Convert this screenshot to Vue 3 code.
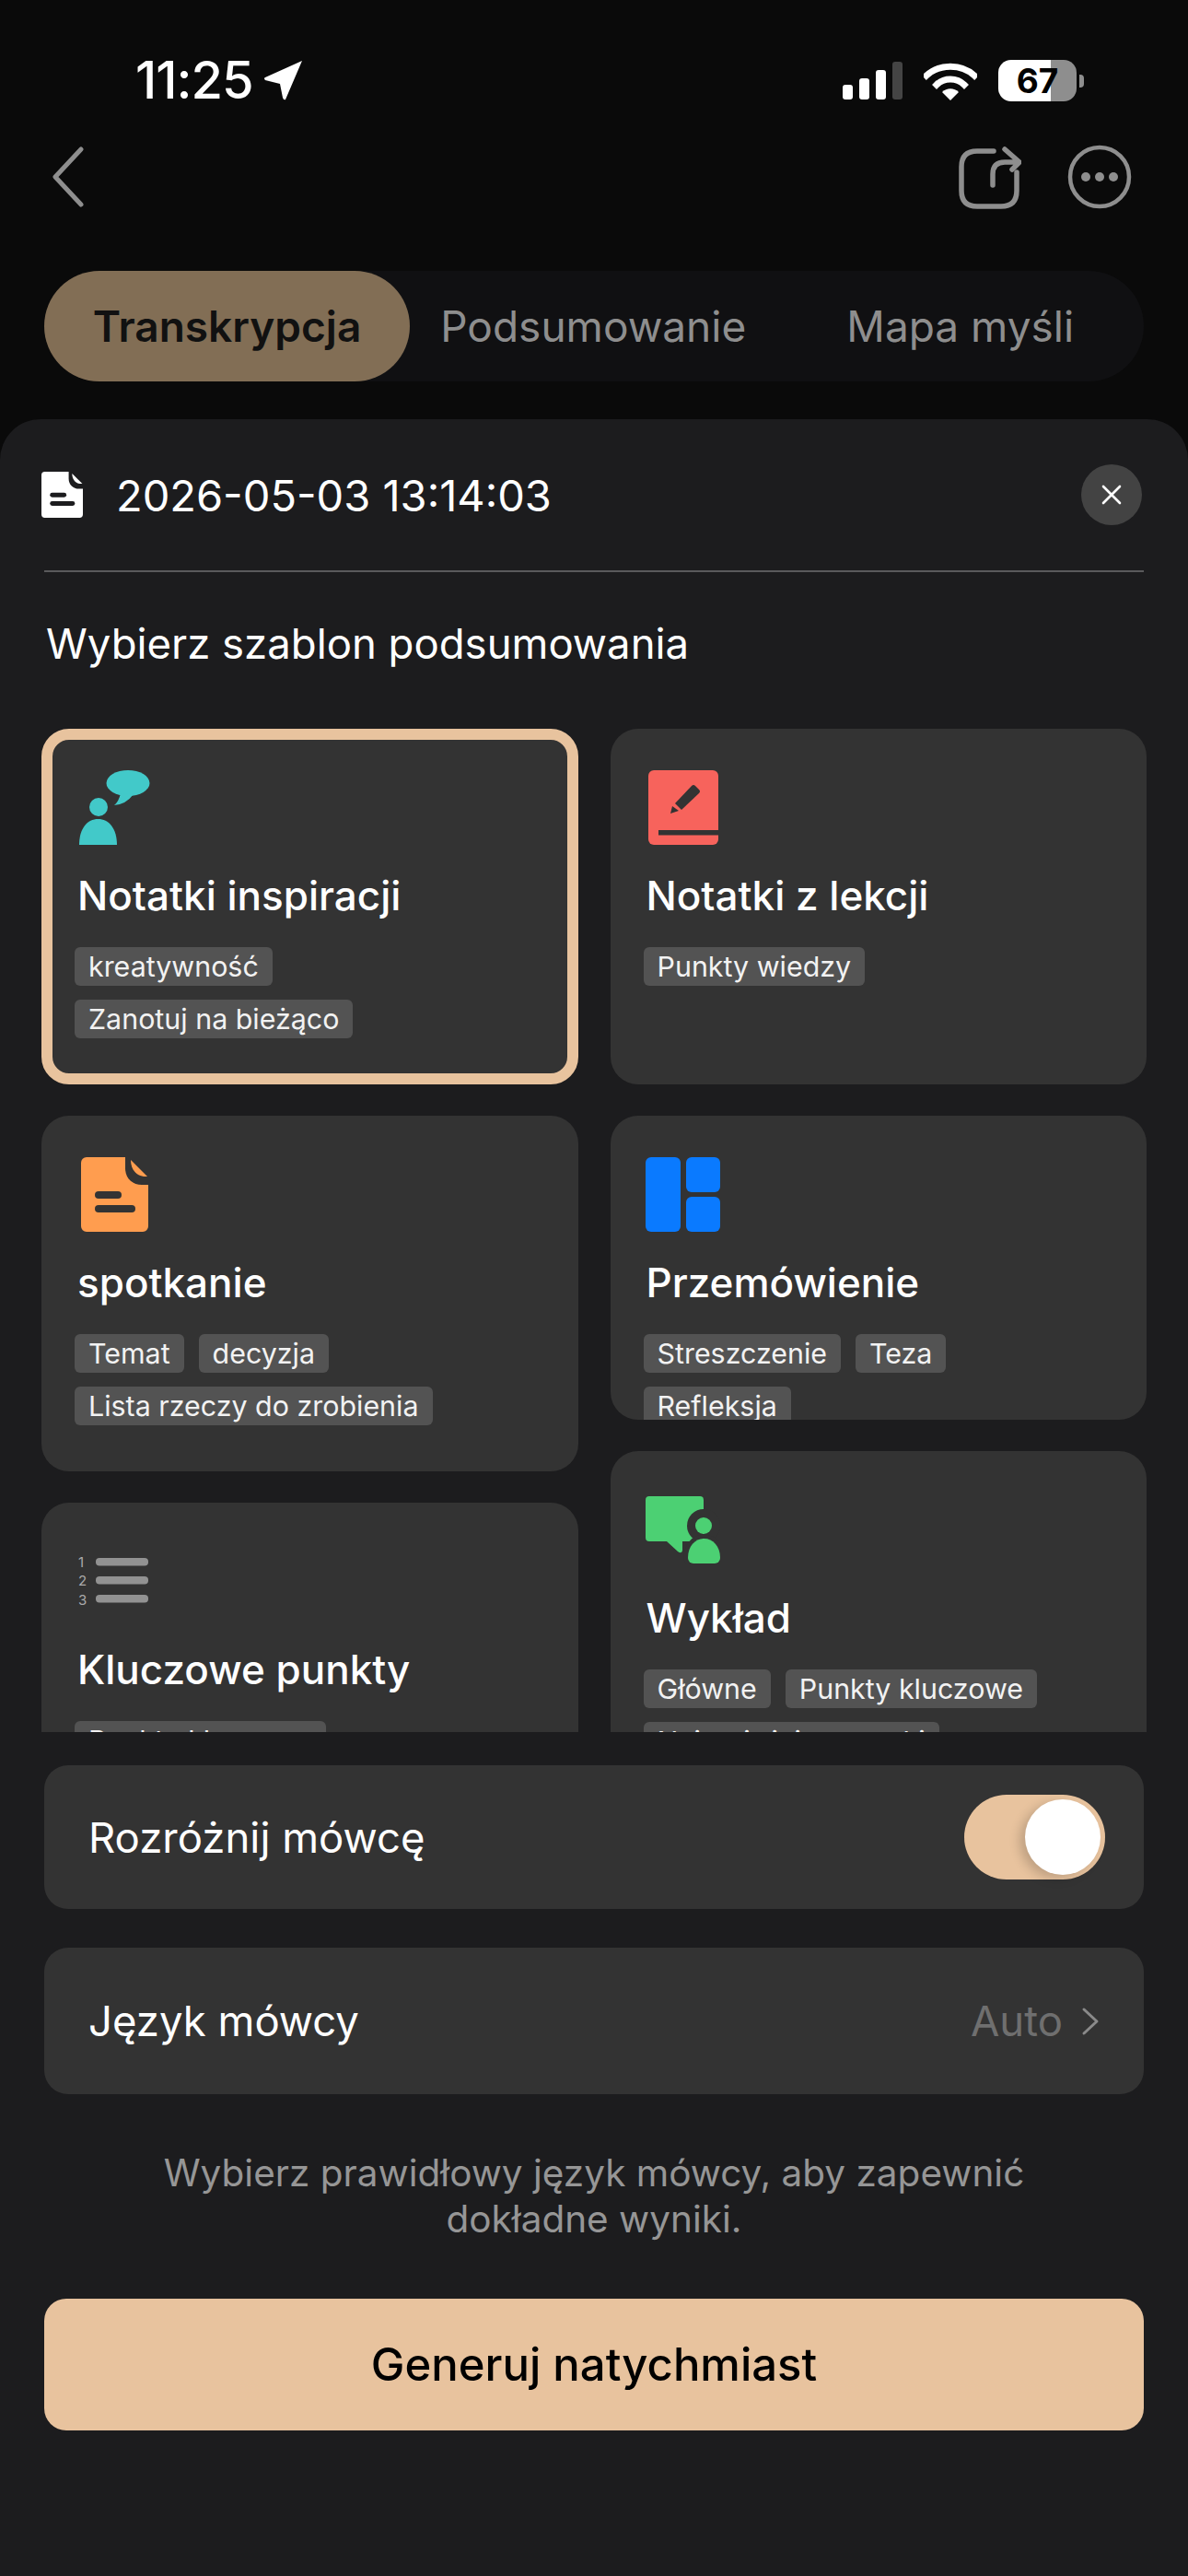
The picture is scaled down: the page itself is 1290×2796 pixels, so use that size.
<script setup>
const columns = [
  [
    { name: 'Notatki inspiracji', icon: 'idea', selected: true, tags: ['kreatywność', 'Zanotuj na bieżąco'] },
    { name: 'spotkanie', icon: 'doc', tags: ['Temat', 'decyzja', 'Lista rzeczy do zrobienia'] },
    { name: 'Kluczowe punkty', icon: 'list', tags: ['Punkty kluczowe'] },
  ],
  [
    { name: 'Notatki z lekcji', icon: 'book', tags: ['Punkty wiedzy'] },
    { name: 'Przemówienie', icon: 'grid', short: true, tags: ['Streszczenie', 'Teza', 'Refleksja'] },
    { name: 'Wykład', icon: 'talk', tags: ['Główne', 'Punkty kluczowe', 'Najważniejsze wątki'] },
  ],
]
</script>

<template>
  <main class="screen">
    <div class="status">
      <div class="clock">
        <span>11:25</span>
        <svg class="loc" viewBox="0 0 44 44" width="44" height="44">
          <path d="M42 1 L24 43 Q22 44 21 41 L18 26 L2 22 Q0 20 2 19 Z" fill="#fff" />
        </svg>
      </div>
      <div class="indicators">
        <svg viewBox="0 0 65 41" width="65" height="41">
          <rect x="0" y="25" width="11" height="16" rx="3" fill="#fff" />
          <rect x="18" y="18" width="11" height="23" rx="3" fill="#fff" />
          <rect x="36" y="9" width="11" height="32" rx="3" fill="#fff" />
          <rect x="54" y="0" width="11" height="41" rx="3" fill="#444" />
        </svg>
        <svg viewBox="0 0 58 42" width="58" height="42">
          <path d="M3 15 C17 2 41 2 55 15" fill="none" stroke="#fff" stroke-width="7" stroke-linecap="square" />
          <path d="M14 25 C22 17 36 17 44 25" fill="none" stroke="#fff" stroke-width="7" stroke-linecap="square" />
          <path d="M29 42 L20 33 C25 28 33 28 38 33 Z" fill="#fff" />
        </svg>
        <div class="battery">
          <div class="battery-body"><span>67</span></div>
          <div class="battery-tip"></div>
        </div>
      </div>
    </div>

    <div class="nav">
      <svg viewBox="0 0 36 66" width="36" height="66">
        <path d="M32 3 L4 33 L32 63" fill="none" stroke="#8e8e8e" stroke-width="5" stroke-linecap="round" stroke-linejoin="round" />
      </svg>
      <div class="nav-right">
        <svg viewBox="0 0 70 70" width="70" height="70">
          <path d="M40 7 H22 Q5 7 5 24 V50 Q5 67 22 67 H48 Q65 67 65 50 V30" fill="none" stroke="#8e8e8e" stroke-width="5.5" stroke-linecap="round" />
          <path d="M39 44 V32 Q39 19 52 19 H67 M52 5 L68 19 L60 27" fill="none" stroke="#8e8e8e" stroke-width="5.5" stroke-linecap="round" stroke-linejoin="round" />
        </svg>
        <svg viewBox="0 0 70 70" width="70" height="70">
          <circle cx="35" cy="35" r="32" fill="none" stroke="#8e8e8e" stroke-width="4.5" />
          <circle cx="20" cy="35" r="5" fill="#8e8e8e" />
          <circle cx="35" cy="35" r="5" fill="#8e8e8e" />
          <circle cx="50" cy="35" r="5" fill="#8e8e8e" />
        </svg>
      </div>
    </div>

    <div class="tabs">
      <div class="tab active">Transkrypcja</div>
      <div class="tab">Podsumowanie</div>
      <div class="tab">Mapa myśli</div>
    </div>

    <section class="sheet">
      <header class="sheet-head">
        <svg class="file-icon" viewBox="0 0 73 81" width="45" height="50">
          <path d="M6 0 H48 V12 C48 23 56 30 66 30 H73 V75 a6 6 0 0 1 -6 6 H6 a6 6 0 0 1 -6 -6 V6 a6 6 0 0 1 6 -6 Z" fill="#fff" />
          <path d="M54 3 L72 21 C62 22 54 15 54 3 Z" fill="#fff" />
          <rect x="15" y="37" width="29" height="8" rx="4" fill="#1c1c1e" />
          <rect x="15" y="52" width="44" height="8" rx="4" fill="#1c1c1e" />
        </svg>
        <span class="stamp">2026-05-03 13:14:03</span>
        <button class="close">
          <svg viewBox="0 0 24 24" width="24" height="24">
            <path d="M3 3 L21 21 M21 3 L3 21" stroke="#fff" stroke-width="2.6" stroke-linecap="round" />
          </svg>
        </button>
      </header>

      <h2 class="pick">Wybierz szablon podsumowania</h2>

      <div class="templates">
        <div v-for="(col, i) in columns" :key="i" class="col">
          <article
            v-for="card in col"
            :key="card.name"
            class="card"
            :class="{ selected: card.selected, short: card.short }"
          >
            <div class="card-icon">
              <svg v-if="card.icon === 'idea'" viewBox="0 0 90 81" width="90" height="81">
                <ellipse cx="54" cy="14" rx="23.5" ry="14" fill="#42c9c9" />
                <path d="M46 25 Q44 34 39 38 Q52 37 60 26 Z" fill="#42c9c9" />
                <circle cx="22" cy="40" r="10" fill="#42c9c9" />
                <path d="M1 81 C1 63 10 53 21.5 53 C33 53 42 63 42 81 Z" fill="#42c9c9" />
              </svg>
              <svg v-else-if="card.icon === 'book'" viewBox="0 0 76 81" width="76" height="81" class="nudge-book">
                <rect width="76" height="81" rx="6" fill="#f7635c" />
                <rect x="11" y="65" width="65" height="5.5" fill="#333" />
                <path d="M29 36 L47 17 Q49 15 51 17 L55 21 Q57 23 55 25 L36 43 Z" fill="#333" />
                <path d="M24 47 L26 39 L33 44 Z" fill="#333" />
              </svg>
              <svg v-else-if="card.icon === 'doc'" viewBox="0 0 73 81" width="73" height="81" class="nudge-doc">
                <path d="M6 0 H48 V12 C48 23 56 30 66 30 H73 V75 a6 6 0 0 1 -6 6 H6 a6 6 0 0 1 -6 -6 V6 a6 6 0 0 1 6 -6 Z" fill="#ff9d4f" />
                <path d="M54 3 L72 21 C62 22 54 15 54 3 Z" fill="#ff9d4f" />
                <rect x="15" y="37" width="29" height="8" rx="4" fill="#333" />
                <rect x="15" y="52" width="44" height="8" rx="4" fill="#333" />
              </svg>
              <svg v-else-if="card.icon === 'grid'" viewBox="0 0 81 81" width="81" height="81" class="nudge-wide">
                <rect width="38" height="81" rx="6" fill="#0a7aff" />
                <rect x="44" width="37" height="38" rx="6" fill="#0a7aff" />
                <rect x="44" y="43" width="37" height="38" rx="6" fill="#0a7aff" />
              </svg>
              <svg v-else-if="card.icon === 'list'" viewBox="0 0 76 56" width="76" height="56">
                <text x="0" y="12" class="num">1</text>
                <text x="0" y="32" class="num">2</text>
                <text x="0" y="53" class="num">3</text>
                <rect x="19" y="2" width="57" height="8.5" rx="4" fill="#929292" />
                <rect x="19" y="22" width="57" height="8.5" rx="4" fill="#929292" />
                <rect x="19" y="42" width="57" height="8.5" rx="4" fill="#929292" />
              </svg>
              <svg v-else viewBox="0 0 81 73" width="81" height="73" class="nudge-wide">
                <path d="M4 0 H59 Q63 0 63 4 V49 H40 V59 Q39 63 35 60 L23 49 H4 Q0 49 0 45 V4 Q0 0 4 0 Z" fill="#4cd073" />
                <circle cx="63" cy="32" r="18" fill="#333" />
                <path d="M46 67 C46 54 54 46 63.5 46 C73 46 81 54 81 67 a6 6 0 0 1 -6 6 H52 a6 6 0 0 1 -6 -6 Z" fill="#4cd073" stroke="#333" stroke-width="9" paint-order="stroke" />
                <circle cx="63" cy="32" r="9" fill="#4cd073" />
              </svg>
            </div>
            <h3 class="card-title">{{ card.name }}</h3>
            <div class="tags">
              <span v-for="tag in card.tags" :key="tag" class="tag">{{ tag }}</span>
            </div>
          </article>
        </div>
      </div>

      <div class="row first">
        <span>Rozróżnij mówcę</span>
        <div class="toggle"><div class="knob"></div></div>
      </div>
      <div class="row second">
        <span>Język mówcy</span>
        <div class="row-value">
          <span>Auto</span>
          <svg viewBox="0 0 20 32" width="20" height="32">
            <path d="M3 3 L17 16 L3 29" fill="none" stroke="#8a8a8a" stroke-width="3" stroke-linecap="round" stroke-linejoin="round" />
          </svg>
        </div>
      </div>

      <p class="hint">Wybierz prawidłowy język mówcy, aby zapewnić<br />dokładne wyniki.</p>

      <button class="generate">Generuj natychmiast</button>
    </section>
  </main>
</template>

<style scoped>
.screen {
  width: 1290px;
  height: 2796px;
  background: #0a0a0a;
  display: flex;
  flex-direction: column;
  overflow: hidden;
  font-family: Inter, "Noto Sans", sans-serif;
  color: #fff;
}

.status {
  height: 130px;
  padding: 0 113px 0 147px;
  display: flex;
  justify-content: space-between;
  align-items: flex-start;
  box-sizing: border-box;
}

.clock {
  display: flex;
  align-items: center;
  gap: 11px;
  margin-top: 60px;
  font-size: 56px;
  font-weight: 500;
  line-height: 54px;
  letter-spacing: -1px;
}

.indicators {
  display: flex;
  align-items: center;
  gap: 23px;
  margin-top: 65px;
}

.battery {
  display: flex;
  align-items: center;
  gap: 3px;
}

.battery-body {
  width: 85px;
  height: 45px;
  border-radius: 14px;
  background: linear-gradient(90deg, #fff 0 67%, #8e8e8e 67% 100%);
  display: flex;
  align-items: center;
  justify-content: center;
  color: #000;
  font-size: 37px;
  font-weight: 700;
}

.battery-tip {
  width: 5px;
  height: 14px;
  background: #8e8e8e;
  border-radius: 0 4px 4px 0;
}

.nav {
  height: 164px;
  padding: 29px 61px 0 56px;
  box-sizing: border-box;
  display: flex;
  justify-content: space-between;
  align-items: flex-start;
}

.nav-right {
  display: flex;
  gap: 50px;
  margin-top: -2px;
}

.tabs {
  margin: 0 48px;
  height: 120px;
  border-radius: 60px;
  background: #101012;
  display: flex;
  align-items: center;
  flex-shrink: 0;
}

.tab {
  height: 120px;
  display: flex;
  align-items: center;
  justify-content: center;
  font-size: 46px;
  color: #8e8e8e;
  flex: 1;
}

.tab.active {
  flex: none;
  width: 397px;
  background: #826e55;
  border-radius: 60px;
  color: #111;
  font-weight: 600;
}

.sheet {
  margin-top: 41px;
  flex: 1;
  background: #1c1c1e;
  border-radius: 44px 44px 0 0;
  padding: 0 48px;
  display: flex;
  flex-direction: column;
}

.sheet-head {
  height: 166px;
  flex-shrink: 0;
  box-sizing: border-box;
  border-bottom: 2px solid #5a5a5c;
  display: flex;
  align-items: center;
}

.file-icon {
  margin-left: -3px;
}

.stamp {
  margin-left: 36px;
  font-size: 47px;
  flex: 1;
}

.close {
  width: 66px;
  height: 66px;
  border-radius: 50%;
  background: #434343;
  border: 0;
  padding: 0;
  display: flex;
  align-items: center;
  justify-content: center;
  margin-right: 2px;
}

.pick {
  margin: 50px 0 0 2px;
  height: 120px;
  flex-shrink: 0;
  font-size: 45.5px;
  font-weight: 400;
  line-height: 56px;
}

.templates {
  height: 1089px;
  flex-shrink: 0;
  margin: 0 -3px;
  overflow: hidden;
  display: flex;
  gap: 35px;
}

.col {
  flex: 1;
  display: flex;
  flex-direction: column;
  gap: 34px;
}

.card {
  height: 386px;
  flex-shrink: 0;
  box-sizing: border-box;
  background: #333;
  border-radius: 30px;
  padding: 45px 36px 0;
  overflow: hidden;
}

.card.short {
  height: 330px;
}

.card.selected {
  border: 12px solid #e8c39e;
  border-radius: 30px;
  padding: 33px 24px 0;
}

.card-icon {
  height: 81px;
  display: flex;
  align-items: center;
  padding-left: 4px;
}

.nudge-book {
  margin-left: 1px;
}

.nudge-doc {
  margin-left: 3px;
}

.nudge-wide {
  margin-left: -2px;
}

.num {
  font-size: 15px;
  fill: #aaa;
}

.card-title {
  margin: 27px 0 0 3px;
  font-size: 44px;
  font-weight: 500;
  line-height: 56px;
}

.tags {
  margin-top: 28px;
  padding-right: 30px;
  display: flex;
  flex-wrap: wrap;
  gap: 15px 16px;
}

.tag {
  height: 42px;
  padding: 0 15px;
  border-radius: 6px;
  background: #535353;
  font-size: 30.4px;
  line-height: 42px;
  color: #f2f2f2;
}

.row {
  height: 156px;
  flex-shrink: 0;
  padding: 0 48px;
  background: #333;
  border-radius: 26px;
  display: flex;
  align-items: center;
  justify-content: space-between;
  font-size: 45.5px;
}

.row.first {
  margin-top: 36px;
  padding-right: 42px;
}

.row.second {
  margin-top: 42px;
  height: 159px;
}

.toggle {
  width: 153px;
  height: 92px;
  border-radius: 46px;
  background: #e8c39e;
  display: flex;
  align-items: center;
  justify-content: flex-end;
  padding-right: 5px;
  box-sizing: border-box;
}

.knob {
  width: 82px;
  height: 82px;
  border-radius: 50%;
  background: #fff;
  box-shadow: -6px 4px 12px rgba(0, 0, 0, 0.18);
}

.row-value {
  display: flex;
  align-items: center;
  gap: 20px;
  color: #6f6f6f;
}

.hint {
  margin: 61px 0 0;
  height: 161px;
  flex-shrink: 0;
  text-align: center;
  font-size: 40.5px;
  line-height: 50px;
  color: #969696;
}

.generate {
  height: 143px;
  flex-shrink: 0;
  border: 0;
  border-radius: 24px;
  background: #e8c39e;
  color: #000;
  font-family: inherit;
  font-size: 49px;
  font-weight: 500;
}
</style>

<style>
html,
body {
  margin: 0;
  background: #0a0a0a;
}
</style>
